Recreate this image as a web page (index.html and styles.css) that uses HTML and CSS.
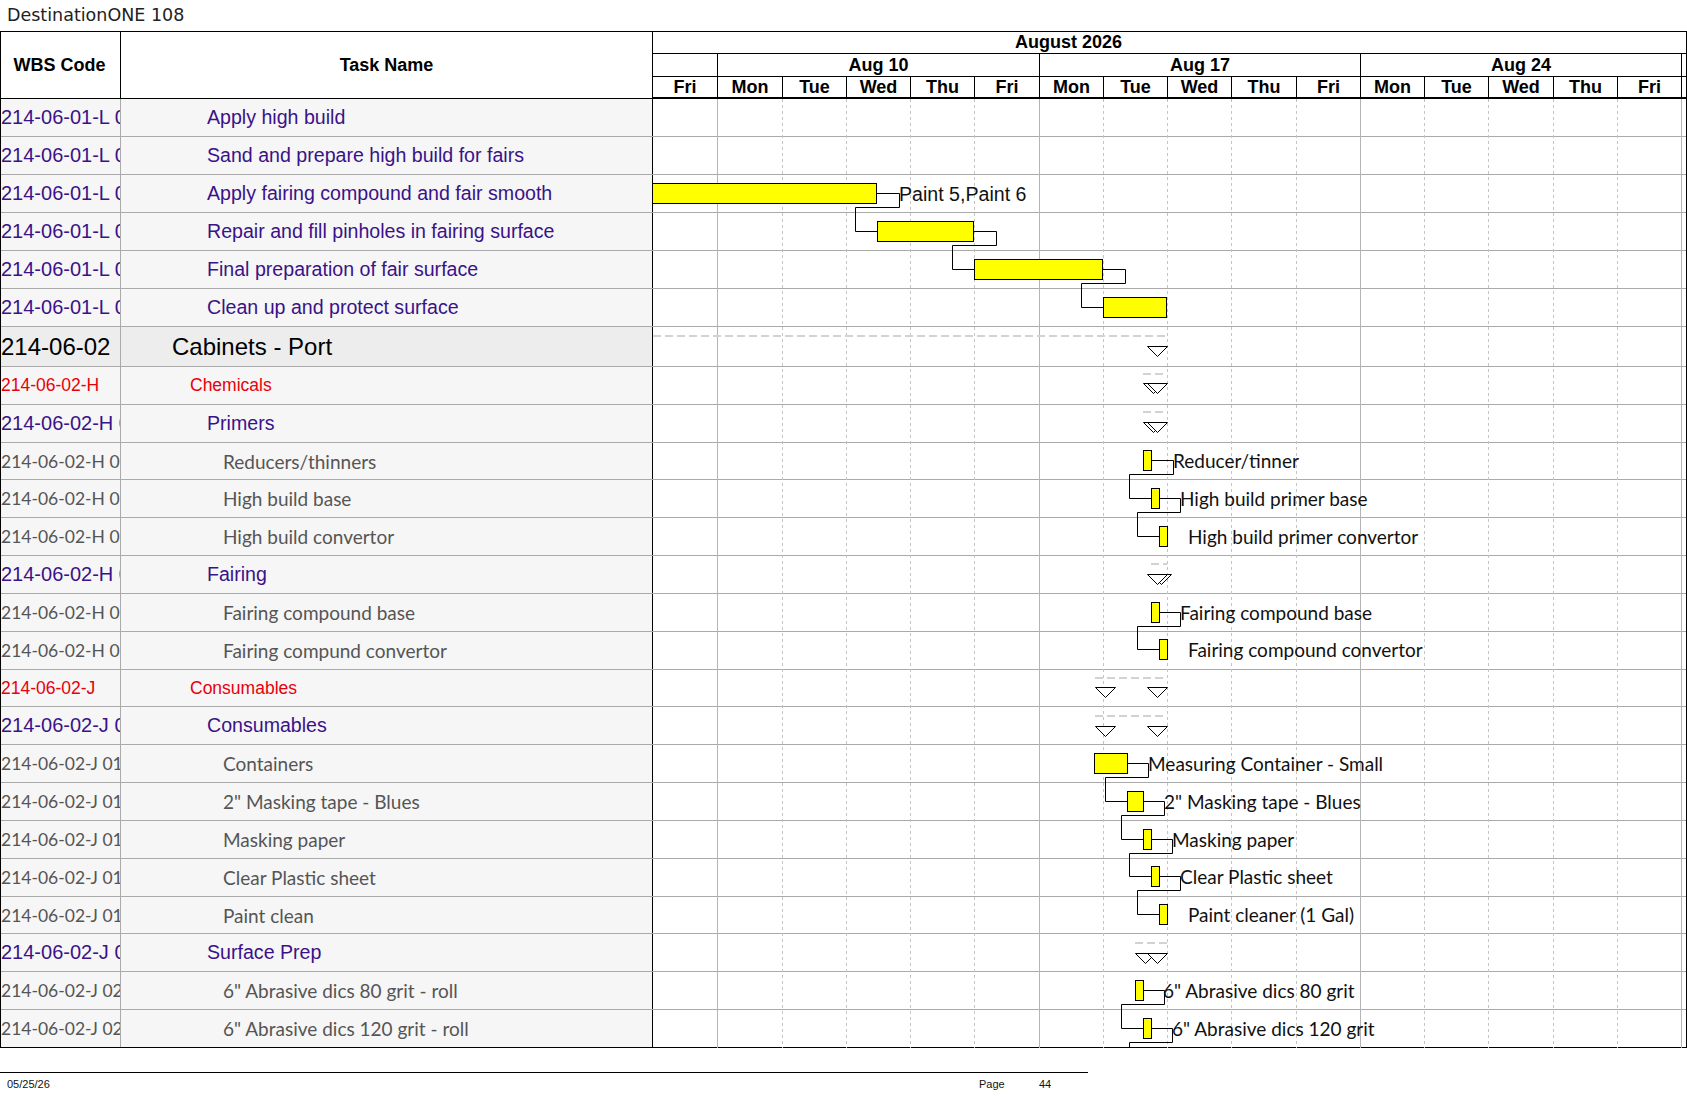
FILE: index.html
```html
<!DOCTYPE html>
<html>
<head>
<meta charset="utf-8">
<title>DestinationONE 108</title>
<link rel="stylesheet" href="styles.css">
</head>
<body>
<div class="title">DestinationONE 108</div>
<div class="sheet">
  <div class="head">
    <div class="h-wbs">WBS Code</div>
    <div class="h-task">Task Name</div>
    <div class="scale">
      <div class="month"><div class="month-span">August 2026</div></div>
      <div class="weeks">
        <div class="wk s1"></div>
        <div class="wk s5">Aug 10</div>
        <div class="wk s5">Aug 17</div>
        <div class="wk s5">Aug 24</div>
        <div class="wk s1"></div>
      </div>
      <div class="days">
        <div class="dy">Fri</div>
        <div class="dy">Mon</div><div class="dy">Tue</div><div class="dy">Wed</div><div class="dy">Thu</div><div class="dy">Fri</div>
        <div class="dy">Mon</div><div class="dy">Tue</div><div class="dy">Wed</div><div class="dy">Thu</div><div class="dy">Fri</div>
        <div class="dy">Mon</div><div class="dy">Tue</div><div class="dy">Wed</div><div class="dy">Thu</div><div class="dy">Fri</div>
        <div class="dy"></div>
      </div>
    </div>
  </div>
  <div class="rows">
    <div class="row r38 purple"><div class="wbs">214-06-01-L 04.01</div><div class="task lv3">Apply high build</div><div class="tl"></div></div>
    <div class="row r38 purple"><div class="wbs">214-06-01-L 04.02</div><div class="task lv3">Sand and prepare high build for fairs</div><div class="tl"></div></div>
    <div class="row r38 purple"><div class="wbs">214-06-01-L 04.03</div><div class="task lv3">Apply fairing compound and fair smooth</div><div class="tl"></div></div>
    <div class="row r38 purple"><div class="wbs">214-06-01-L 04.04</div><div class="task lv3">Repair and fill pinholes in fairing surface</div><div class="tl"></div></div>
    <div class="row r38 purple"><div class="wbs">214-06-01-L 04.05</div><div class="task lv3">Final preparation of fair surface</div><div class="tl"></div></div>
    <div class="row r38 purple"><div class="wbs">214-06-01-L 04.06</div><div class="task lv3">Clean up and protect surface</div><div class="tl"></div></div>
    <div class="row r40 sum1"><div class="wbs">214-06-02</div><div class="task lv1">Cabinets - Port</div><div class="tl"></div></div>
    <div class="row rr red"><div class="wbs">214-06-02-H</div><div class="task lv2">Chemicals</div><div class="tl"></div></div>
    <div class="row rr purple"><div class="wbs">214-06-02-H 01</div><div class="task lv3">Primers</div><div class="tl"></div></div>
    <div class="row rr gray"><div class="wbs">214-06-02-H 01.01</div><div class="task lv4">Reducers/thinners</div><div class="tl"></div></div>
    <div class="row rr gray"><div class="wbs">214-06-02-H 01.02</div><div class="task lv4">High build base</div><div class="tl"></div></div>
    <div class="row rr gray"><div class="wbs">214-06-02-H 01.03</div><div class="task lv4">High build convertor</div><div class="tl"></div></div>
    <div class="row rr purple"><div class="wbs">214-06-02-H 02</div><div class="task lv3">Fairing</div><div class="tl"></div></div>
    <div class="row rr gray"><div class="wbs">214-06-02-H 02.01</div><div class="task lv4">Fairing compound base</div><div class="tl"></div></div>
    <div class="row rr gray"><div class="wbs">214-06-02-H 02.02</div><div class="task lv4">Fairing compund convertor</div><div class="tl"></div></div>
    <div class="row rr red"><div class="wbs">214-06-02-J</div><div class="task lv2">Consumables</div><div class="tl"></div></div>
    <div class="row rr purple"><div class="wbs">214-06-02-J 01</div><div class="task lv3">Consumables</div><div class="tl"></div></div>
    <div class="row rr gray"><div class="wbs">214-06-02-J 01.01</div><div class="task lv4">Containers</div><div class="tl"></div></div>
    <div class="row rr gray"><div class="wbs">214-06-02-J 01.02</div><div class="task lv4">2" Masking tape - Blues</div><div class="tl"></div></div>
    <div class="row rr gray"><div class="wbs">214-06-02-J 01.03</div><div class="task lv4">Masking paper</div><div class="tl"></div></div>
    <div class="row rr gray"><div class="wbs">214-06-02-J 01.04</div><div class="task lv4">Clear Plastic sheet</div><div class="tl"></div></div>
    <div class="row rr gray"><div class="wbs">214-06-02-J 01.05</div><div class="task lv4">Paint clean</div><div class="tl"></div></div>
    <div class="row rr purple"><div class="wbs">214-06-02-J 02</div><div class="task lv3">Surface Prep</div><div class="tl"></div></div>
    <div class="row rr gray"><div class="wbs">214-06-02-J 02.01</div><div class="task lv4">6" Abrasive dics 80 grit - roll</div><div class="tl"></div></div>
    <div class="row rr gray last"><div class="wbs">214-06-02-J 02.02</div><div class="task lv4">6" Abrasive dics 120 grit - roll</div><div class="tl"></div></div>

    <svg class="gantt" width="1033" height="949" viewBox="0 0 1033 949">
      <path class="grid-d" d="M129.5 0V949M193.5 0V949M257.5 0V949M321.5 0V949M450.5 0V949M514.5 0V949M578.5 0V949M643.5 0V949M771.5 0V949M835.5 0V949M900.5 0V949M964.5 0V949"/>
      <path class="grid-s" d="M64.5 0V949M386.5 0V949M707.5 0V949M1028.5 0V949"/>
      <path class="sumline" d="M0 237H514M490 275H514M490 313H514M498 465H514M442 579H514M442 617H514M482 844H514"/>
      <path class="link" d="M224 94.5H246.5V108.5H202.5V132.5H224M321 132.5H343.5V146.5H299.5V170.5H321M450 170.5H472.5V184.5H428.5V208.5H450"/>
      <path class="link" d="M498 361.5H520.5V375.5H476.5V399.5H498M506 399.5H527.5V413.5H484.5V437.5H506M506 513.5H527.5V527.5H484.5V550.5H506"/>
      <path class="link" d="M474 664.5H495.5V678.5H452.5V702.5H474M490 702.5H511.5V716.5H468.5V740.5H490M498 740.5H519.5V754.5H476.5V777.5H498M506 777.5H527.5V791.5H484.5V815.5H506"/>
      <path class="link" d="M490 891.5H511.5V905.5H468.5V929.5H490M498 929.5H519.5V943.5H476.5V952"/>
      <rect class="bar" x="-0.5" y="84.5" width="224" height="20"/>
      <rect class="bar" x="224.5" y="122.5" width="96" height="20"/>
      <rect class="bar" x="321.5" y="160.5" width="128" height="20"/>
      <rect class="bar" x="450.5" y="198.5" width="63" height="20"/>
      <rect class="bar" x="490.5" y="351.5" width="8" height="20"/>
      <rect class="bar" x="498.5" y="389.5" width="8" height="20"/>
      <rect class="bar" x="506.5" y="427.5" width="8" height="20"/>
      <rect class="bar" x="498.5" y="503.5" width="8" height="20"/>
      <rect class="bar" x="506.5" y="540.5" width="8" height="20"/>
      <rect class="bar" x="441.5" y="654.5" width="33" height="20"/>
      <rect class="bar" x="474.5" y="692.5" width="16" height="20"/>
      <rect class="bar" x="490.5" y="730.5" width="8" height="20"/>
      <rect class="bar" x="498.5" y="767.5" width="8" height="20"/>
      <rect class="bar" x="506.5" y="805.5" width="8" height="20"/>
      <rect class="bar" x="482.5" y="881.5" width="8" height="20"/>
      <rect class="bar" x="490.5" y="919.5" width="8" height="20"/>
      <polygon class="tri" points="494.5,247.5 514.5,247.5 504.5,257.5"/>
      <polygon class="tri" points="490.5,284.5 510.5,284.5 500.5,294.5"/>
      <polygon class="tri" points="494.5,284.5 514.5,284.5 504.5,294.5"/>
      <polygon class="tri" points="490.5,323.5 510.5,323.5 500.5,333.5"/>
      <polygon class="tri" points="494.5,323.5 514.5,323.5 504.5,333.5"/>
      <polygon class="tri" points="498.5,475.5 518.5,475.5 508.5,485.5"/>
      <polygon class="tri" points="494.5,475.5 514.5,475.5 504.5,485.5"/>
      <polygon class="tri" points="442.5,588.5 462.5,588.5 452.5,598.5"/>
      <polygon class="tri" points="494.5,588.5 514.5,588.5 504.5,598.5"/>
      <polygon class="tri" points="442.5,627.5 462.5,627.5 452.5,637.5"/>
      <polygon class="tri" points="494.5,627.5 514.5,627.5 504.5,637.5"/>
      <polygon class="tri" points="482.5,854.5 502.5,854.5 492.5,864.5"/>
      <polygon class="tri" points="494.5,854.5 514.5,854.5 504.5,864.5"/>
      <text class="lbl-a" x="246" y="102">Paint 5,Paint 6</text>
      <text class="lbl" x="520" y="368.5">Reducer/tinner</text>
      <text class="lbl" x="527" y="406.5">High build primer base</text>
      <text class="lbl" x="535" y="444.5">High build primer convertor</text>
      <text class="lbl" x="527" y="520.5">Fairing compound base</text>
      <text class="lbl" x="535" y="557.5">Fairing compound convertor</text>
      <text class="lbl" x="495" y="671.5">Measuring Container - Small</text>
      <text class="lbl" x="511" y="709.5">2" Masking tape - Blues</text>
      <text class="lbl" x="519" y="747.5">Masking paper</text>
      <text class="lbl" x="527" y="784.5">Clear Plastic sheet</text>
      <text class="lbl" x="535" y="822.5">Paint cleaner (1 Gal)</text>
      <text class="lbl" x="510" y="898.5">6" Abrasive dics 80 grit</text>
      <text class="lbl" x="519" y="936.5">6" Abrasive dics 120 grit</text>
    </svg>
  </div>
</div>
<div class="footer">
  <div class="f-date">05/25/26</div>
  <div class="f-page">Page</div>
  <div class="f-num">44</div>
</div>
</body>
</html>
```

FILE: styles.css
```css
* { box-sizing: border-box; }
html, body { margin: 0; padding: 0; background: #fff; }
body {
  width: 1687px;
  height: 1097px;
  overflow: hidden;
  font-family: "Liberation Sans", Arial, sans-serif;
  color: #000;
}
.title {
  height: 31px;
  padding-left: 7px;
  font-family: "DejaVu Sans", "Liberation Sans", sans-serif;
  font-size: 17.5px;
  line-height: 30px;
  color: #222;
  white-space: nowrap;
}
.sheet {
  width: 1687px;
  border-top: 1px solid #000;
  border-left: 1px solid #000;
  border-right: 1px solid #000;
}
.head {
  display: flex;
  height: 67px;
}
.h-wbs, .h-task {
  border-right: 1px solid #000;
  border-bottom: 1px solid #000;
  display: flex;
  align-items: center;
  justify-content: center;
  font-weight: bold;
  font-size: 18px;
  background: #fff;
}
.h-wbs { width: 120px; padding-right: 2px; }
.h-task { width: 532px; }
.scale {
  flex: 1;
  display: flex;
  flex-direction: column;
  overflow: hidden;
  font-weight: bold;
  font-size: 18px;
}
.month {
  height: 22px;
  border-bottom: 1px solid #000;
  overflow: hidden;
}
.month-span {
  width: 1353px;
  margin-left: -261px;
  text-align: center;
  line-height: 21px;
}
.weeks, .days {
  display: grid;
  grid-template-columns: 64px 65px 64px 64px 64px 65px 64px 64px 64px 65px 64px 64px 64px 65px 64px 64px 1fr;
}
.weeks { height: 23px; border-bottom: 1px solid #000; }
.days { height: 22px; border-bottom: 2px solid #000; }
.wk, .dy {
  border-left: 1px solid #000;
  display: flex;
  align-items: center;
  justify-content: center;
  white-space: nowrap;
  overflow: hidden;
}
.wk:first-child, .dy:first-child { border-left: none; }
.s1 { grid-column: span 1; }
.s5 { grid-column: span 5; }
.wk { line-height: 22px; }
.dy { line-height: 20px; }

.rows { position: relative; }
.row {
  display: flex;
  border-bottom: 1px solid #aaa;
}
.row.last { border-bottom-color: #000; }
.r38 { height: 38px; }
.r40 { height: 40px; }
.rr { height: 37.83px; }
.wbs {
  width: 120px;
  flex: none;
  border-right: 1px solid #aaa;
  background: #f6f6f6;
  display: flex;
  align-items: center;
  white-space: nowrap;
  overflow: hidden;
}
.task {
  width: 532px;
  flex: none;
  border-right: 1px solid #000;
  background: #f6f6f6;
  display: flex;
  align-items: center;
  white-space: nowrap;
  overflow: hidden;
}
.tl { flex: 1; background: #fff; }
.lv1 { padding-left: 51px; }
.lv2 { padding-left: 69px; }
.lv3 { padding-left: 86px; }
.lv4 { padding-left: 102px; }

.purple { color: #3a1289; }
.purple .wbs { font-size: 20px; }
.purple .task { font-size: 19.6px; }
.red { color: #e8000b; font-size: 17.5px; }
.gray { color: #555; font-family: Lato, "Liberation Sans", sans-serif; font-size: 19px; }
.gray .wbs { font-size: 17.5px; }
.sum1 { color: #000; font-size: 24px; }
.sum1 .wbs, .sum1 .task { background: #ededed; }

.gantt {
  position: absolute;
  left: 652px;
  top: 0;
  overflow: hidden;
}
.grid-d { stroke: #c4c4c4; stroke-width: 1; stroke-dasharray: 3 3; fill: none; }
.grid-s { stroke: #b4b4b4; stroke-width: 1; fill: none; }
.sumline { stroke: #d2d2d2; stroke-width: 2; stroke-dasharray: 8 4; fill: none; }
.link { stroke: #000; stroke-width: 1; fill: none; }
.bar { fill: #ffff00; stroke: #000; stroke-width: 1; }
.tri { fill: #fff; stroke: #000; stroke-width: 1; }
.lbl { font-family: Lato, "Liberation Sans", sans-serif; font-size: 19px; fill: #111; }
.lbl-a { font-family: "Liberation Sans", Arial, sans-serif; font-size: 19.6px; fill: #111; }

.footer {
  width: 1088px;
  margin-top: 24px;
  border-top: 1px solid #000;
  display: grid;
  grid-template-columns: 979px 60px auto;
  font-size: 11px;
  line-height: 22px;
  color: #111;
}
.f-date { padding-left: 7px; }
```
